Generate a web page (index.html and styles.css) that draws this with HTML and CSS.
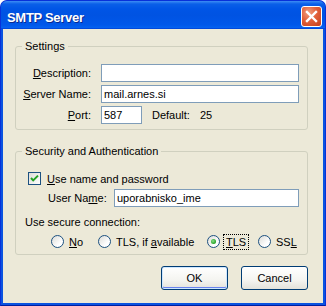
FILE: index.html
```html
<!DOCTYPE html>
<html>
<head>
	<meta charset="UTF-8">
	<title>SMTP Server</title>
	<link rel="stylesheet" href="styles.css">
</head>
<body>
	<div class="window">
		<div class="titlebar">
			<span class="title">SMTP Server</span>
			<span class="close">
				<svg width="13" height="13" viewBox="0 0 13 13"><path d="M2 2L11 11M11 2L2 11" stroke="#fff" stroke-width="2.4" stroke-linecap="square"/></svg>
			</span>
		</div>
		<div class="client">
			<fieldset class="group settings">
				<legend>Settings</legend>
				<div class="form">
					<label class="lbl"><u>D</u>escription:</label>
					<div class="textbox"></div>
					<label class="lbl"><u>S</u>erver Name:</label>
					<div class="textbox">mail.arnes.si</div>
					<label class="lbl"><u>P</u>ort:</label>
					<div class="port-row">
						<div class="textbox port">587</div>
						<span class="default">Default:</span>
						<span class="default-val">25</span>
					</div>
				</div>
			</fieldset>

			<fieldset class="group security">
				<legend>Security and Authentication</legend>
				<div class="check-row">
					<span class="checkbox">
						<svg width="11" height="11" viewBox="0 0 11 11"><path d="M2 5L4.2 7.4L9 2.6" fill="none" stroke="#21a121" stroke-width="2"/></svg>
					</span>
					<span><u>U</u>se name and password</span>
				</div>
				<div class="user-row">
					<label class="lbl">User Na<u>m</u>e:</label>
					<div class="textbox">uporabnisko_ime</div>
				</div>
				<div class="secure-lbl">Use secure connection:</div>
				<div class="radios">
					<span class="opt"><span class="radio"></span><span><u>N</u>o</span></span>
					<span class="opt"><span class="radio"></span><span>TLS, if <u>a</u>vailable</span></span>
					<span class="opt"><span class="radio on"></span><span class="focus"><u>T</u>LS</span></span>
					<span class="opt"><span class="radio"></span><span>SS<u>L</u></span></span>
				</div>
			</fieldset>

			<div class="buttons">
				<button class="btn default-btn">OK</button>
				<button class="btn">Cancel</button>
			</div>
		</div>
	</div>
</body>
</html>
```
FILE: styles.css
```css
*{margin:0;padding:0;box-sizing:border-box;}
body{
	background:#fff;
	font-family:"Liberation Sans",Arial,sans-serif;
	font-size:11px;
	color:#000;
	white-space:nowrap;
}
u{text-decoration:underline;text-underline-offset:1px;}
.window{
	width:326px;
	height:306px;
	display:flex;
	flex-direction:column;
	background:#0a53e0;
	border:1px solid #0831d9;
	border-bottom-color:#001ea0;
	border-radius:7px 7px 0 0;
	padding:0 2px 2px;
}
.titlebar{
	height:28px;
	display:flex;
	align-items:center;
	justify-content:space-between;
	padding:1px 3px 0 6px;
	margin:0 -2px;
	border-radius:6px 6px 0 0;
	background:linear-gradient(#3d8df5 0,#0a5fe8 3px,#0055e6 8px,#0053e2 50%,#0058ea 85%,#0461f0 95%,#003dd0 100%);
}
.title{
	color:#fff;
	font-weight:bold;
	font-size:13px;
	letter-spacing:-0.3px;
	text-shadow:1px 1px #0a2a90;
	margin-top:3px;
}
.close{
	width:21px;
	height:21px;
	display:flex;
	align-items:center;
	justify-content:center;
	border:1px solid #fff;
	border-radius:3px;
	background:radial-gradient(circle at 35% 30%,#f0a080 0,#e2603a 45%,#c4401c 100%);
	margin-top:1px;
}
.client{
	flex:1;
	min-width:0;
	background:#ece9d8;
	padding:0 15px 0 12px;
	display:flex;
	flex-direction:column;
}
.group{
	border:1px solid #d0d0bf;
	border-radius:3px;
	padding:0 8px 0 0;
	min-width:0;
}
.group legend{
	margin-left:6px;
	padding:0 3px;
	line-height:13px;
}
.settings{
	margin-top:11px;
	padding-top:11px;
	padding-bottom:5px;
}
.form{
	display:grid;
	grid-template-columns:75px 1fr;
	column-gap:10px;
	row-gap:3px;
}
.lbl{
	text-align:right;
	line-height:18px;
}
.textbox{
	height:18px;
	background:#fff;
	border:1px solid #7f9db9;
	padding:0 2px;
	line-height:16px;
}
.port-row{
	display:flex;
	align-items:center;
}
.port{width:41px;}
.default{margin-left:10px;}
.default-val{margin-left:10px;}
.security{
	margin-top:15px;
	padding-top:13px;
	padding-bottom:5px;
}
.check-row{
	display:flex;
	align-items:center;
	gap:6px;
	margin-left:12px;
	height:15px;
}
.checkbox{
	width:13px;
	height:13px;
	flex-shrink:0;
	border:1px solid #1c5180;
	background:linear-gradient(135deg,#dcdcd7,#fff);
	display:flex;
	align-items:center;
	justify-content:center;
}
.user-row{
	display:flex;
	margin-top:3px;
	margin-left:32px;
	gap:10px;
}
.user-row .lbl{text-align:left;width:56px;flex-shrink:0;}
.user-row .textbox{flex:1;}
.secure-lbl{
	margin-left:9px;
	margin-top:9px;
	line-height:13px;
}
.radios{
	display:grid;
	grid-template-columns:47px 109px 51px auto;
	align-items:center;
	margin-top:5px;
	margin-left:35px;
	height:15px;
}
.opt{
	display:flex;
	align-items:center;
	gap:5px;
}
.radio{
	width:13px;
	height:13px;
	flex-shrink:0;
	border-radius:50%;
	border:1px solid #1c5180;
	background:linear-gradient(135deg,#dcdcd7,#fff 70%);
	display:flex;
	align-items:center;
	justify-content:center;
}
.radio.on::after{
	content:"";
	width:5px;
	height:5px;
	border-radius:50%;
	background:radial-gradient(circle at 40% 40%,#8be08b,#21a121 70%);
}
.focus{
	outline:1px dotted #000;
	outline-offset:1px;
	padding:0 1px;
}
.buttons{
	display:flex;
	justify-content:flex-end;
	gap:13px;
	margin-top:11px;
}
.btn{
	width:67px;
	height:24px;
	font:inherit;
	color:#000;
	border:1px solid #003c74;
	border-radius:3px;
	background:linear-gradient(#fff 0,#f4f4f0 60%,#e3e2da 100%);
}
.default-btn{
	box-shadow:inset 0 0 0 1px #cee7ff,inset 0 -1px 0 1px #6982ee;
}
```
